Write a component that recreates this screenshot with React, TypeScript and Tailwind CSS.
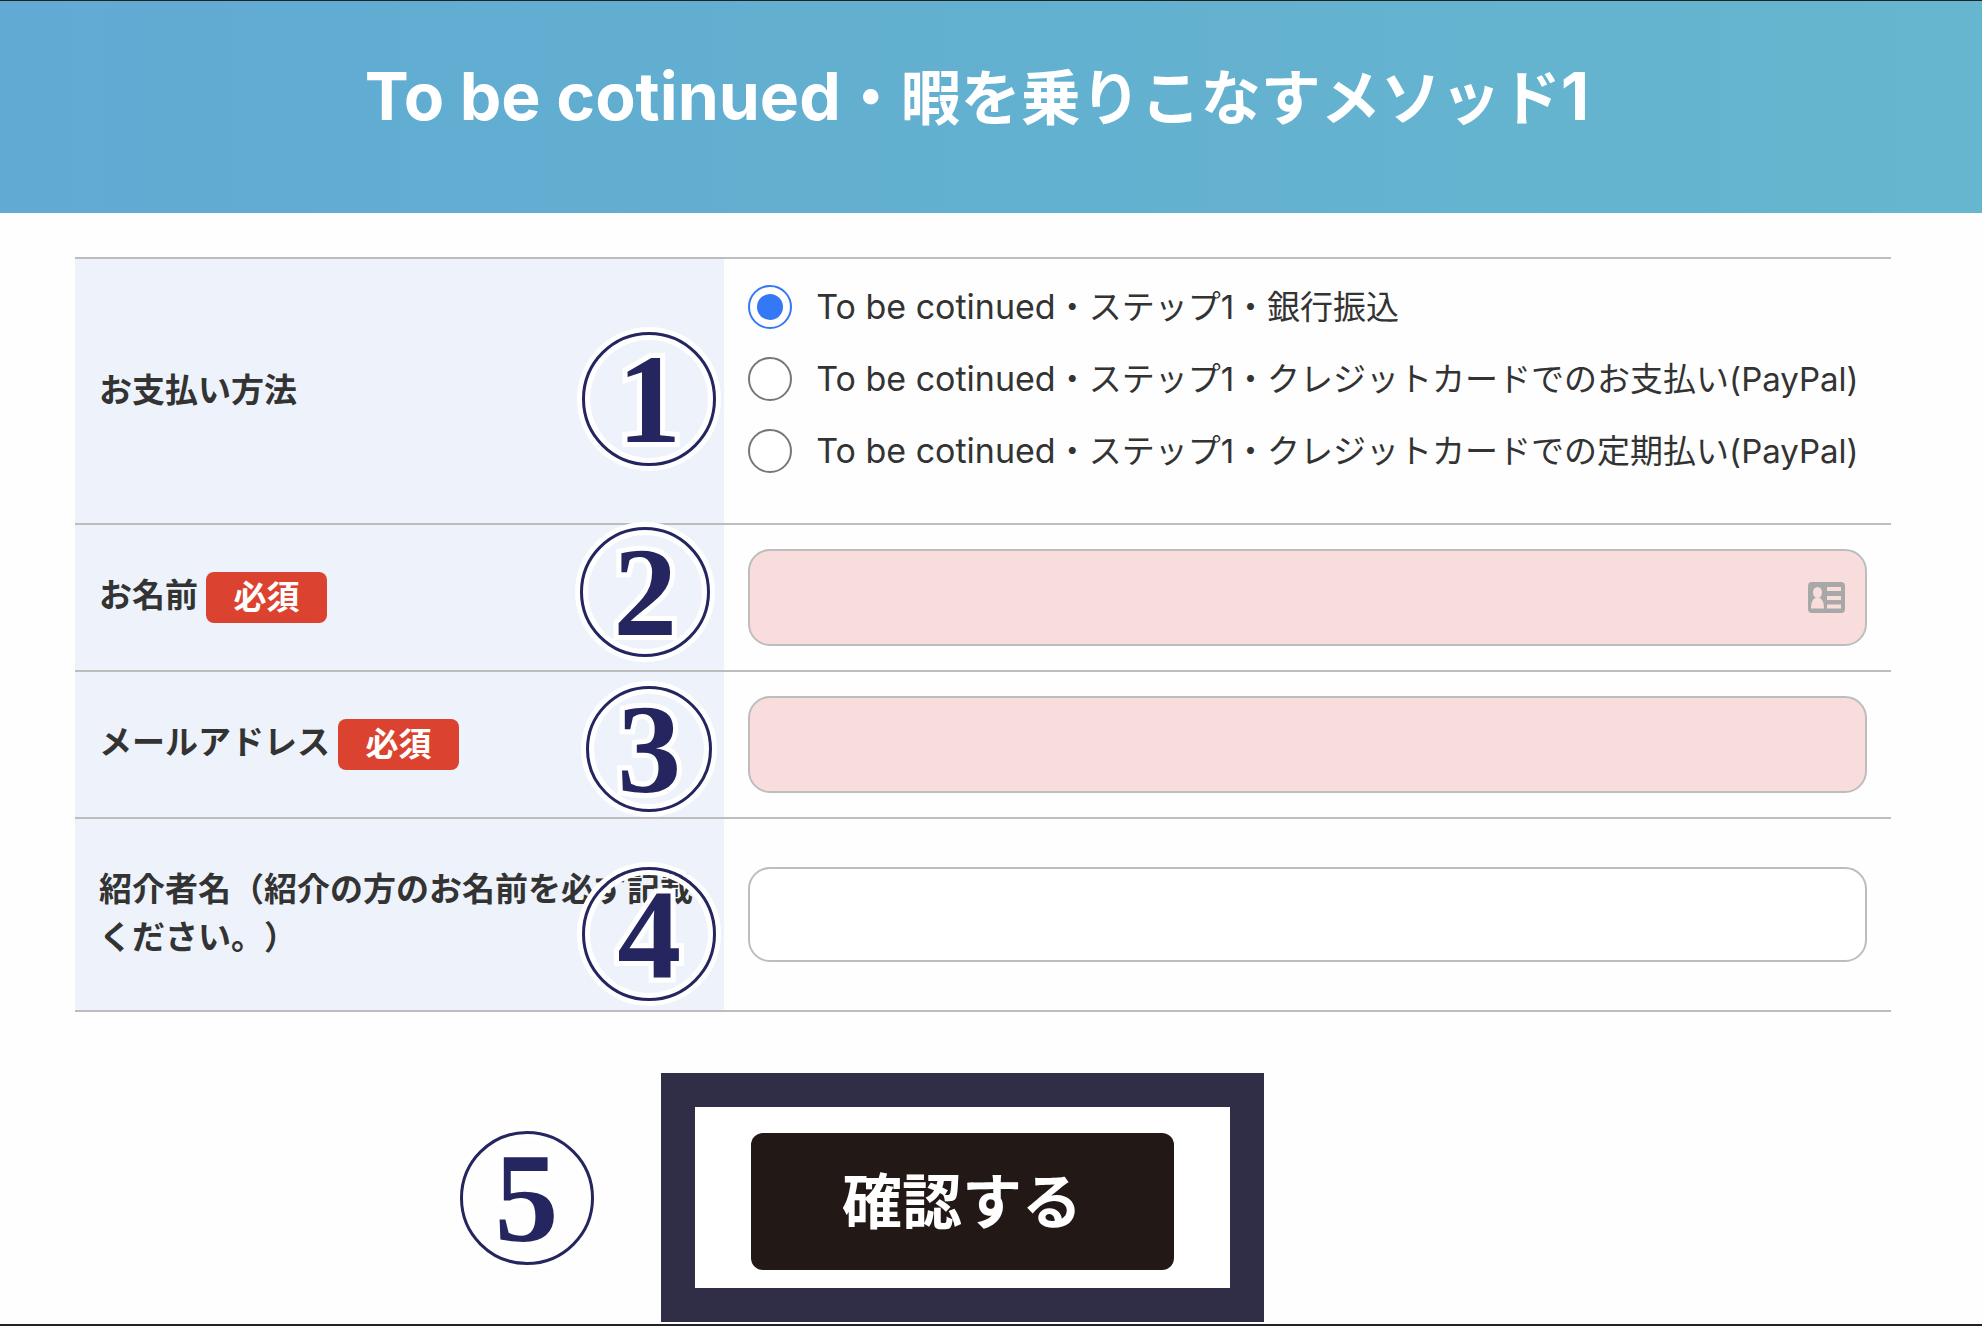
import { ReactNode, useState } from 'react';
import clsx from 'clsx';

const product = 'To be cotinued';

const paymentMethods = [
  { id: 'bank', label: '・ステップ1・銀行振込' },
  { id: 'paypal', label: '・ステップ1・クレジットカードでのお支払い(PayPal)' },
  { id: 'paypal-recurring', label: '・ステップ1・クレジットカードでの定期払い(PayPal)' },
];

function StepMark({ step, className }: { step: number; className?: string }) {
  return (
    <span
      className={clsx(
        'flex items-center justify-center rounded-full border-[3px] border-[#25265f] text-[#25265f]',
        'shadow-[0_0_0_5px_#fff,inset_0_0_0_5px_#fff]',
        "font-['Liberation_Serif',serif] text-[128px] leading-none font-bold",
        '[-webkit-text-stroke:10px_#fff] [paint-order:stroke_fill]',
        className
      )}
    >
      {step}
    </span>
  );
}

function RequiredBadge() {
  return (
    <span className="ml-2 flex h-[51px] w-[121px] items-center justify-center rounded-lg bg-[#db4330] text-white">
      必須
    </span>
  );
}

function ContactCardIcon() {
  return (
    <svg viewBox="0 0 37 31" className="h-[31px] w-[37px]" aria-hidden="true">
      <rect width="37" height="31" rx="4" fill="#a8a8a8" />
      <g fill="#f9dddd">
        <ellipse cx="9.5" cy="10.5" rx="4.5" ry="5.5" />
        <path d="M3 26.5c0-6 2-10 4.5-10.5h4c2.500.5 4.500 4.500 4.500 10.500z" />
        <rect x="19" y="5" width="14" height="4" />
        <rect x="19" y="14" width="14" height="4" />
        <rect x="19" y="22.5" width="14" height="4" />
      </g>
    </svg>
  );
}

interface RowProps {
  heading: ReactNode;
  mark: ReactNode;
  children: ReactNode;
  className?: string;
}

function Row({ heading, mark, children, className }: RowProps) {
  return (
    <tr className="border-y-2 border-[#bdbdbd]">
      <th className="relative w-[35.75%] bg-[#eef3fb] px-6 text-left font-bold">
        {heading}
        {mark}
      </th>
      <td className={clsx('px-6', className)}>{children}</td>
    </tr>
  );
}

const inputStyle = 'block w-full rounded-[22px] border-2 border-[#bdbdbd] px-6 focus:outline-none';

export default function App() {
  const [method, setMethod] = useState('bank');

  return (
    <div className="bg-[#fefefe] font-[Inter,'Noto_Sans_CJK_JP',sans-serif] text-[33px] text-[#333]">
      <header className="border-t border-[#222] bg-linear-to-r from-[#61aad4] via-[#62afd0] via-40% to-[#66b6cf] pt-[50px] pr-7 pb-[70px]">
        <h1 className="text-center text-[60px] leading-[90px] font-bold text-white">
          <span className="text-[66px]">{product}</span>・暇を乗りこなすメソッド
          <span className="text-[66px]">1</span>
        </h1>
      </header>

      <form className="pt-11 pr-[91px] pl-[75px]" onSubmit={(e) => e.preventDefault()}>
        <table className="w-full border-collapse">
          <tbody>
            <Row
              heading="お支払い方法"
              mark={<StepMark step={1} className="absolute top-[73px] right-2 size-[134px]" />}
              className="pt-3 pb-9"
            >
              {paymentMethods.map((item) => (
                <label key={item.id} className="flex h-[72px] items-center gap-6 whitespace-nowrap">
                  <input
                    type="radio"
                    name="payment"
                    checked={method === item.id}
                    onChange={() => setMethod(item.id)}
                    className="flex size-11 shrink-0 appearance-none items-center justify-center rounded-full border-2 border-[#777] bg-white before:size-[26px] before:rounded-full checked:border-[#3478f6] checked:before:bg-[#3478f6]"
                  />
                  <span>
                    <span className="text-[34px]">{product}</span>
                    {item.label}
                  </span>
                </label>
              ))}
            </Row>
            <Row
              heading={
                <div className="flex items-center">
                  <label htmlFor="name" className="pb-1">
                    お名前
                  </label>
                  <RequiredBadge />
                </div>
              }
              mark={<StepMark step={2} className="absolute top-0.5 right-3.5 size-[130px]" />}
              className="py-6"
            >
              <div className="relative">
                <input id="name" type="text" className={clsx(inputStyle, 'h-[97px] bg-[#f9dddd]')} />
                <span className="absolute inset-y-0 right-[22px] flex items-center">
                  <ContactCardIcon />
                </span>
              </div>
            </Row>
            <Row
              heading={
                <div className="flex items-center">
                  <label htmlFor="email" className="pb-1">
                    メールアドレス
                  </label>
                  <RequiredBadge />
                </div>
              }
              mark={<StepMark step={3} className="absolute top-3.5 right-3 size-[126px]" />}
              className="py-6"
            >
              <input id="email" type="email" className={clsx(inputStyle, 'h-[97px] bg-[#f9dddd]')} />
            </Row>
            <Row
              heading={
                <label htmlFor="introducer" className="block pb-1 leading-[48px] [text-spacing-trim:space-all]">
                  紹介者名（紹介の方のお名前を必ず記載ください。）
                </label>
              }
              mark={<StepMark step={4} className="absolute top-12 right-2 size-[134px]" />}
              className="py-12"
            >
              <input id="introducer" type="text" className={clsx(inputStyle, 'h-[95px] bg-white')} />
            </Row>
          </tbody>
        </table>

        <div className="grid grid-cols-[1fr_auto_1fr] items-center pt-[61px] pr-[42px]">
          <StepMark step={5} className="mr-[67px] size-[134px] justify-self-end" />
          <div className="border-[34px] border-[#2f2e46] bg-white px-14 pt-[26px] pb-[18px]">
            <button
              type="submit"
              className="block h-[137px] w-[423px] rounded-xl bg-[#221815] text-[60px] font-bold text-white"
            >
              確認する
            </button>
          </div>
        </div>
      </form>
      <div className="mt-0.5 border-b-2 border-[#222]" />
    </div>
  );
}
